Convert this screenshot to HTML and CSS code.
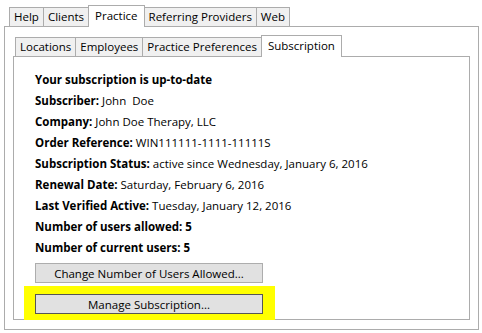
FILE: index.html
```html
<!DOCTYPE html>
<html>
<head>
	<title>Practice - Subscription</title>
	<link rel="stylesheet" href="styles.css">
</head>
<body>
	<div class="window">
		<div class="tabs outer-tabs">
			<div class="tab">Help</div>
			<div class="tab">Clients</div>
			<div class="tab active">Practice</div>
			<div class="tab">Referring Providers</div>
			<div class="tab">Web</div>
		</div>
		<div class="pane outer-pane">
			<div class="tabs inner-tabs">
				<div class="tab">Locations</div>
				<div class="tab">Employees</div>
				<div class="tab">Practice Preferences</div>
				<div class="tab active">Subscription</div>
			</div>
			<div class="pane inner-pane">
				<div class="line"><b>Your subscription is up-to-date</b></div>
				<div class="line"><b>Subscriber:</b> John&nbsp; Doe</div>
				<div class="line"><b>Company:</b> John Doe Therapy, LLC</div>
				<div class="line"><b>Order Reference:</b> WIN111111-1111-11111S</div>
				<div class="line"><b>Subscription Status:</b> active since Wednesday, January 6, 2016</div>
				<div class="line"><b>Renewal Date:</b> Saturday, February 6, 2016</div>
				<div class="line"><b>Last Verified Active:</b> Tuesday, January 12, 2016</div>
				<div class="line"><b>Number of users allowed: 5</b></div>
				<div class="line"><b>Number of current users: 5</b></div>

				<button class="btn change-btn">Change Number of Users Allowed...</button>
				<div class="highlight">
					<button class="btn manage-btn">Manage Subscription...</button>
				</div>
			</div>
		</div>
	</div>
</body>
</html>
```

FILE: styles.css
```css
body {
	margin: 0;
	background: #fff;
	font-family: "Open Sans", "Noto Sans", sans-serif;
	font-size: 11.5px;
	color: #000;
}

.window {
	padding: 5px 4px 0 4px;
	width: 475px;
}

.tabs {
	display: flex;
	align-items: flex-end;
}

.tab {
	height: 18px;
	line-height: 18px;
	padding: 0 4px;
	background: #f0f0f0;
	border: 1px solid #acacac;
	border-bottom: none;
	border-left: none;
	white-space: nowrap;
}

.tab:first-child {
	border-left: 1px solid #acacac;
}

.tab.active {
	height: 21px;
	line-height: 20px;
	background: #fff;
	padding: 0 6px;
	margin-bottom: -1px;
	border-left: 1px solid #acacac;
}

.outer-tabs {
	padding-left: 5px;
}

.outer-tabs .tab.active {
	margin-left: -1px;
}

.pane {
	border: 1px solid #acacac;
	background: #fff;
}

.outer-pane {
	height: 294px;
	padding: 8px 8px 0 8px;
}

.inner-tabs {
	padding-left: 2px;
}

.inner-tabs .tab.active {
	margin-left: -1px;
}

.inner-pane {
	height: 250px;
	padding: 12px 0 0 21px;
}

.line {
	height: 21px;
	line-height: 21px;
	white-space: nowrap;
}

.btn {
	display: block;
	width: 228px;
	height: 20px;
	padding: 0;
	font-family: inherit;
	font-size: 11.5px;
	color: #000;
	background: #e1e1e1;
	border: 1px solid #adadad;
}

.change-btn {
	margin-top: 5px;
}

.highlight {
	width: 228px;
	margin: 3px 0 0 -11px;
	padding: 8px 12px 6px 11px;
	background: #ffff00;
}

.manage-btn {
	border-color: #555;
}
```
